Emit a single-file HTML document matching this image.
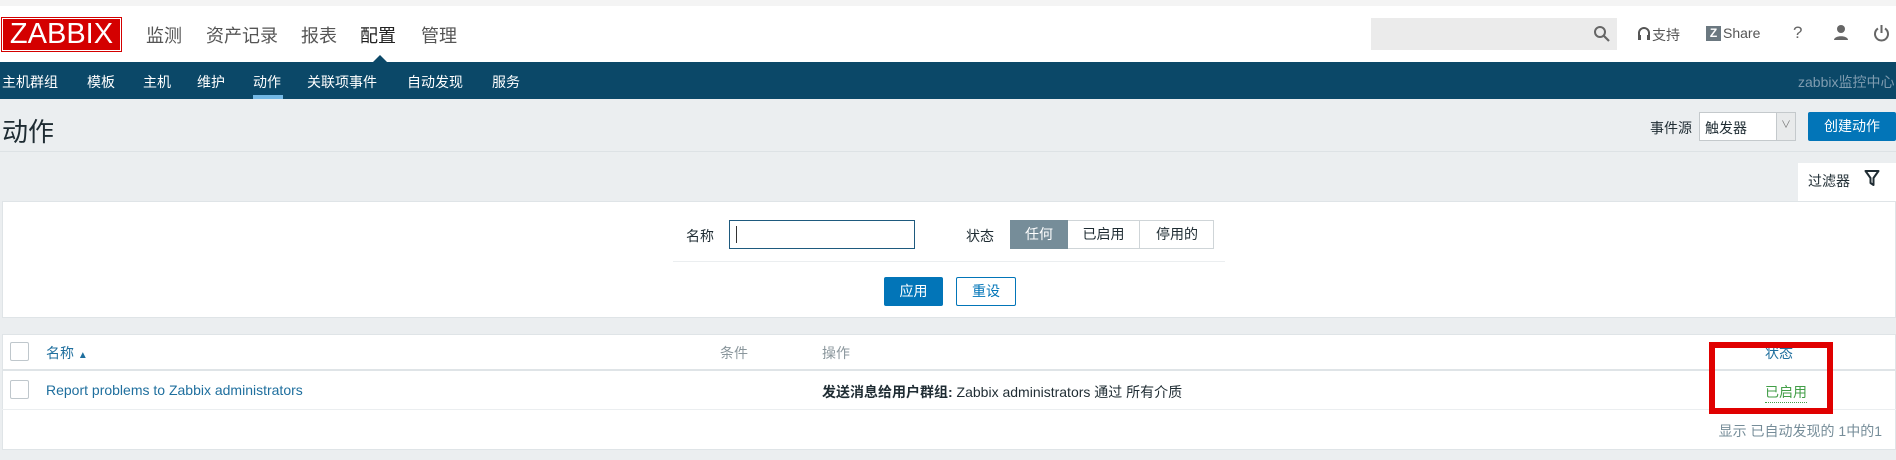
<!DOCTYPE html>
<html><head><meta charset="utf-8"><style>
*{margin:0;padding:0;box-sizing:border-box}
body{width:1896px;height:460px;background:#ebeef0;font-family:"Liberation Sans","Noto Sans CJK SC",sans-serif;font-size:14px;color:#1f2c33;position:relative;overflow:hidden}
.a{position:absolute;white-space:nowrap}
.hdr{left:0;top:0;width:1896px;height:62px;background:#fff;border-top:6px solid #f4f4f4}
.logo{left:2px;top:18px;width:119px;height:33px;background:#d40000;color:#fff;font-size:29px;line-height:31px;text-align:center;border:1px solid #fff;outline:1px solid #d40000;letter-spacing:0px}
.tm{top:22px;font-size:18px;color:#555}
.nav{left:0;top:62px;width:1896px;height:37px;background:#0b4868}
.ni{top:72px;font-size:14px;color:#fff}
.cb{width:19px;height:19px;border:1px solid #bfc7cc;border-radius:2px;background:#fff}
</style></head><body>
<div class="a hdr"></div>
<div class="a logo">ZABBIX</div>
<div class="a tm" style="left:146px">监测</div>
<div class="a tm" style="left:206px">资产记录</div>
<div class="a tm" style="left:301px">报表</div>
<div class="a tm" style="left:360px;color:#222">配置</div>
<div class="a tm" style="left:421px">管理</div>
<div class="a" style="left:373px;top:55px;width:0;height:0;border-left:7px solid transparent;border-right:7px solid transparent;border-bottom:7px solid #0b4868"></div>
<div class="a" style="left:1371px;top:18px;width:246px;height:32px;background:#ebebeb"></div>
<svg class="a" style="left:1593px;top:25px" width="18" height="18" viewBox="0 0 18 18"><circle cx="7" cy="7" r="5" fill="none" stroke="#666" stroke-width="2"/><path d="M11 11l5 5" stroke="#666" stroke-width="2.2"/></svg>
<svg class="a" style="left:1637px;top:26px" width="14" height="16" viewBox="0 0 14 16"><path d="M2 11V7a5 5 0 0 1 10 0v4" fill="none" stroke="#555" stroke-width="2"/><rect x="1" y="9" width="3" height="5" fill="#555"/><rect x="10" y="9" width="3" height="5" fill="#555"/></svg>
<div class="a" style="left:1652px;top:25px;font-size:14px;color:#555">支持</div>
<div class="a" style="left:1706px;top:26px;width:15px;height:15px;background:#6b7880;color:#fff;font-size:12px;font-weight:bold;line-height:15px;text-align:center">Z</div>
<div class="a" style="left:1723px;top:25px;font-size:14px;color:#555">Share</div>
<div class="a" style="left:1793px;top:23px;font-size:17px;color:#666">?</div>
<svg class="a" style="left:1833px;top:24px" width="16" height="18" viewBox="0 0 16 18"><circle cx="8" cy="5" r="4" fill="#666"/><path d="M1 16c0-5 14-5 14 0z" fill="#666"/></svg>
<svg class="a" style="left:1873px;top:24px" width="17" height="18" viewBox="0 0 17 18"><path d="M5 4.5a6.5 6.5 0 1 0 7 0" fill="none" stroke="#666" stroke-width="2"/><path d="M8.5 1v8" stroke="#666" stroke-width="2"/></svg>
<div class="a nav"></div>
<div class="a ni" style="left:2px">主机群组</div>
<div class="a ni" style="left:87px">模板</div>
<div class="a ni" style="left:143px">主机</div>
<div class="a ni" style="left:197px">维护</div>
<div class="a ni" style="left:253px">动作</div>
<div class="a" style="left:253px;top:95px;width:30px;height:4px;background:#74b8e4"></div>
<div class="a ni" style="left:307px">关联项事件</div>
<div class="a ni" style="left:407px">自动发现</div>
<div class="a ni" style="left:492px">服务</div>
<div class="a ni" style="left:1798px;color:#7f9cb0">zabbix监控中心</div>
<div class="a" style="left:2px;top:112px;font-size:26px;color:#1f2c33">动作</div>
<div class="a" style="left:1650px;top:118px;font-size:14px">事件源</div>
<div class="a" style="left:1699px;top:112px;width:97px;height:29px;background:#fff;border:1px solid #c4c9cc"></div>
<div class="a" style="left:1705px;top:118px;font-size:14px">触发器</div>
<div class="a" style="left:1776px;top:113px;width:19px;height:27px;background:#e8eaeb;border-left:1px solid #c4c9cc;color:#777;font-size:10px;text-align:center;line-height:25px">&#8744;</div>
<div class="a" style="left:1808px;top:112px;width:88px;height:29px;background:#0275b8;border-radius:2px;color:#fff;font-size:14px;line-height:29px;text-align:center">创建动作</div>
<div class="a" style="left:0;top:151px;width:1896px;height:1px;background:#dde2e5"></div>
<div class="a" style="left:1798px;top:163px;width:98px;height:40px;background:#fff"></div>
<div class="a" style="left:1808px;top:171px;font-size:14px">过滤器</div>
<svg class="a" style="left:1864px;top:169px" width="16" height="18" viewBox="0 0 16 18"><path d="M1.5 2h13L9.5 9v7l-3-2V9z" fill="none" stroke="#1f2c33" stroke-width="2" stroke-linejoin="round"/></svg>
<div class="a" style="left:2px;top:201px;width:1894px;height:117px;background:#fff;border:1px solid #dfe4e7"></div>
<div class="a" style="left:686px;top:226px">名称</div>
<div class="a" style="left:729px;top:220px;width:186px;height:29px;border:1px solid #1e5a7e;background:#fff"></div>
<div class="a" style="left:736px;top:226px;width:1px;height:17px;background:#333"></div>
<div class="a" style="left:966px;top:226px">状态</div>
<div class="a" style="left:1010px;top:220px;width:204px;height:29px;border:1px solid #cfd5d8;background:#fff"></div>
<div class="a" style="left:1010px;top:220px;width:58px;height:29px;background:#768d99;color:#fff;line-height:29px;text-align:center">任何</div>
<div class="a" style="left:1068px;top:220px;width:72px;height:29px;border-right:1px solid #cfd5d8;line-height:29px;text-align:center">已启用</div>
<div class="a" style="left:1140px;top:220px;width:74px;height:29px;line-height:29px;text-align:center">停用的</div>
<div class="a" style="left:673px;top:261px;width:552px;height:1px;background:#ebeef0"></div>
<div class="a" style="left:884px;top:277px;width:59px;height:29px;background:#0275b8;border-radius:2px;color:#fff;line-height:29px;text-align:center">应用</div>
<div class="a" style="left:956px;top:277px;width:60px;height:29px;border:1px solid #0275b8;border-radius:2px;background:#fff;color:#0275b8;line-height:27px;text-align:center">重设</div>
<div class="a" style="left:2px;top:334px;width:1894px;height:116px;background:#fff;border:1px solid #dfe4e7"></div>
<div class="a" style="left:2px;top:369px;width:1894px;height:2px;background:#dfe4e7"></div>
<div class="a" style="left:2px;top:409px;width:1894px;height:1px;background:#ebeef0"></div>
<div class="a cb" style="left:10px;top:342px"></div>
<div class="a" style="left:46px;top:343px;color:#1f6f9e">名称 <span style="font-size:10px">▲</span></div>
<div class="a" style="left:720px;top:343px;color:#8a969c">条件</div>
<div class="a" style="left:822px;top:343px;color:#8a969c">操作</div>
<div class="a" style="left:1765px;top:343px;color:#1f6f9e">状态</div>
<div class="a cb" style="left:10px;top:380px"></div>
<div class="a" style="left:46px;top:382px;color:#1f6f9e">Report problems to Zabbix administrators</div>
<div class="a" style="left:822px;top:382px"><b>发送消息给用户群组:</b> Zabbix administrators 通过 所有介质</div>
<div class="a" style="left:1765px;top:382px;color:#429e47;border-bottom:1px dotted #429e47">已启用</div>
<div class="a" style="right:14px;top:421px;color:#768d99">显示 已自动发现的 1中的1</div>
<div class="a" style="left:1709px;top:342px;width:124px;height:72px;border:6px solid #e00000"></div>
</body></html>
